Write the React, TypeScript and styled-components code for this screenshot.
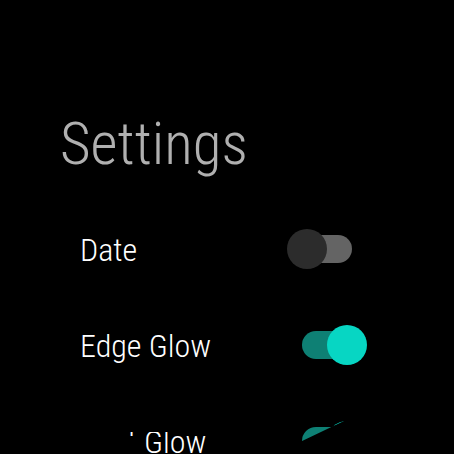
import React from "react";
import styled, { createGlobalStyle } from "styled-components";

const GlobalStyle = createGlobalStyle`
  html, body {
    margin: 0;
    padding: 0;
    background: #000;
  }
  * {
    box-sizing: border-box;
  }
`;

const Screen = styled.div`
  width: 454px;
  height: 454px;
  overflow: hidden;
  background: #000;
  padding-top: 114px;
  display: flex;
  flex-direction: column;
  font-family: "Roboto Condensed", Roboto, "Noto Sans", sans-serif;
  font-stretch: 87.5%;
  font-weight: 300;
`;

const Title = styled.h1`
  margin: 0 0 29px;
  padding-left: 60px;
  font-size: 59px;
  line-height: 59px;
  font-weight: 300;
  color: #b0b0b0;
`;

const List = styled.div`
  display: flex;
  flex-direction: column;
`;

const Row = styled.div`
  flex: 0 0 96px;
  height: 96px;
  display: grid;
  grid-template-columns: 1fr 50px;
  align-items: center;
  padding: 0 102px 0 80px;
`;

// the last item is caught mid-scroll, only a wedge of it shows
const PartialRow = styled(Row)`
  padding-left: 75px;
  clip-path: polygon(
    129px 38px,
    300px 38px,
    300px 26px,
    346px 26px,
    300px 48px,
    300px 60px,
    140px 60px,
    140px 42px,
    129px 42px
  );
`;

const Label = styled.span`
  font-size: 32px;
  line-height: 96px;
  color: #fff;
  white-space: nowrap;
`;

const Switch = styled.div`
  position: relative;
  width: 50px;
  height: 40px;
  margin-bottom: 2px;
`;

const Track = styled.div<{ $on: boolean }>`
  position: absolute;
  left: 0;
  top: 6px;
  width: 50px;
  height: 28px;
  border-radius: 14px;
  background: ${(p) => (p.$on ? "#0e8074" : "#646464")};
`;

const Thumb = styled.div<{ $on: boolean }>`
  position: absolute;
  top: 0;
  left: ${(p) => (p.$on ? "25px" : "-15px")};
  width: 40px;
  height: 40px;
  border-radius: 50%;
  background: ${(p) => (p.$on ? "#07d6c3" : "#2c2c2c")};
`;

const Toggle = ({ on }: { on: boolean }) => (
  <Switch>
    <Track $on={on} />
    <Thumb $on={on} />
  </Switch>
);

export default function App() {
  return (
    <>
      <GlobalStyle />
      <Screen>
        <Title>Settings</Title>
        <List>
          <Row>
            <Label>Date</Label>
            <Toggle on={false} />
          </Row>
          <Row>
            <Label>Edge Glow</Label>
            <Toggle on={true} />
          </Row>
          <PartialRow>
            <Label>Light Glow</Label>
            <Toggle on={true} />
          </PartialRow>
        </List>
      </Screen>
    </>
  );
}
